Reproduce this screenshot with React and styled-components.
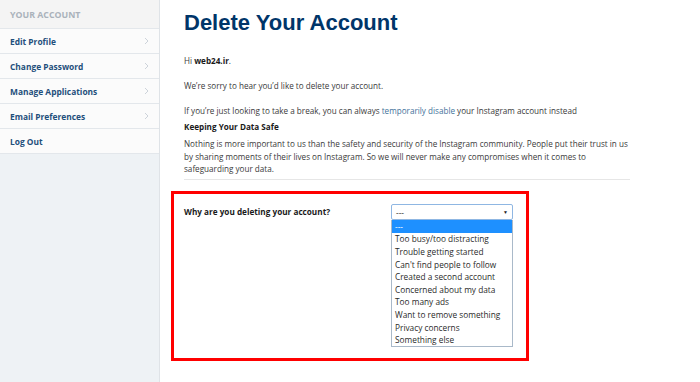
import React from 'react';
import styled, { createGlobalStyle } from 'styled-components';

const GlobalStyle = createGlobalStyle`
  html, body {
    margin: 0;
    padding: 0;
    background: #ffffff;
  }
  body {
    font-family: "Open Sans", "Liberation Sans", sans-serif;
    color: #262626;
  }
  * { box-sizing: border-box; }
`;

const navItems = ['Edit Profile', 'Change Password', 'Manage Applications', 'Email Preferences', 'Log Out'];

const reasons = [
    '---',
    'Too busy/too distracting',
    'Trouble getting started',
    "Can't find people to follow",
    'Created a second account',
    'Concerned about my data',
    'Too many ads',
    'Want to remove something',
    'Privacy concerns',
    'Something else',
];

function Chevron() {
    return (
        <svg width="5" height="8" viewBox="0 0 5 8">
            <path d="M1 1 L4 4 L1 7" fill="none" stroke="#c7ced6" strokeWidth="0.9" />
        </svg>
    );
}

function App() {
    return (
        <>
            <GlobalStyle />
            <Page>
                <Sidebar>
                    <SidebarHeader>Your Account</SidebarHeader>
                    {navItems.map((item) => (
                        <NavItem key={item}>
                            <span>{item}</span>
                            {item !== 'Log Out' && <Chevron />}
                        </NavItem>
                    ))}
                </Sidebar>

                <Main>
                    <Title>Delete Your Account</Title>
                    <Text $top={19}>Hi <b>web24.ir</b>.</Text>
                    <Text $top={12.5}>We&rsquo;re sorry to hear you&rsquo;d like to delete your account.</Text>
                    <Text $top={12.5}>
                        If you&rsquo;re just looking to take a break, you can always{' '}
                        <Link href="#">temporarily disable</Link> your Instagram account instead
                    </Text>
                    <SubTitle>Keeping Your Data Safe</SubTitle>
                    <Text $top={4.5}>
                        Nothing is more important to us than the safety and security of the Instagram community.
                        People put their trust in us by sharing moments of their lives on Instagram. So we will
                        never make any compromises when it comes to safeguarding your data.
                    </Text>
                    <Divider />

                    <FormSection>
                        <Label>Why are you deleting your account?</Label>
                        <SelectWrap>
                            <SelectBox>
                                <span>---</span>
                                <Arrow>&#9660;</Arrow>
                            </SelectBox>
                            <OptionList>
                                {reasons.map((r, i) => (
                                    <Option key={r} $active={i === 0}>{r}</Option>
                                ))}
                            </OptionList>
                        </SelectWrap>
                    </FormSection>
                </Main>
            </Page>
        </>
    );
}

const Page = styled.div`
  display: flex;
  height: 100vh;
  overflow: hidden;
`;

const Sidebar = styled.nav`
  width: 160px;
  flex-shrink: 0;
  background: #eef2f5;
  border-right: 1px solid #dfe3e7;
  display: flex;
  flex-direction: column;
`;

const SidebarHeader = styled.div`
  height: 29px;
  padding: 2px 0 0 10px;
  display: flex;
  align-items: center;
  background: #f4f4f4;
  border-bottom: 1px solid #e3e7eb;
  color: #aab2bb;
  font-size: 8.8px;
  font-weight: 700;
  text-transform: uppercase;
`;

const NavItem = styled.div`
  height: 25px;
  padding: 0 10px 0 10px;
  display: flex;
  align-items: center;
  justify-content: space-between;
  background: #fbfbfb;
  border-bottom: 1px solid #e3e7eb;
  color: #1f4f7b;
  font-size: 8.4px;
  font-weight: 700;
`;

const Main = styled.main`
  flex: 1;
  padding: 10px 0 0 24px;
`;

const Title = styled.h1`
  margin: 0;
  font-family: "Liberation Sans", Arial, sans-serif;
  font-size: 22px;
  line-height: 26px;
  font-weight: 700;
  color: #003569;
`;

const Text = styled.p`
  margin: ${(p) => p.$top}px 0 0;
  width: 446px;
  font-size: 8.15px;
  line-height: 12.5px;
  color: #3a3a3a;

  b {
    color: #1a1a1a;
    font-weight: 700;
  }
`;

const Link = styled.a`
  color: #3f729b;
  text-decoration: none;
`;

const SubTitle = styled.h3`
  margin: 3.5px 0 0;
  font-size: 8.15px;
  line-height: 12.5px;
  font-weight: 700;
  color: #1a1a1a;
`;

const Divider = styled.hr`
  margin: 3.5px 0 0;
  width: 446px;
  border: 0;
  border-top: 1px solid #e6e6e6;
`;

const FormSection = styled.section`
  margin: 11px 0 0 -13px;
  width: 358px;
  border: 3px solid #ff0000;
  padding: 10px 13px 11px 10px;
  display: flex;
  align-items: flex-start;
`;

const Label = styled.label`
  width: 207px;
  flex-shrink: 0;
  padding-top: 2px;
  font-size: 8.2px;
  line-height: 12px;
  font-weight: 700;
  color: #1a1a1a;
`;

const SelectWrap = styled.div`
  width: 122px;
  flex-shrink: 0;
  display: flex;
  flex-direction: column;
`;

const SelectBox = styled.div`
  height: 16px;
  padding: 0 4px;
  display: flex;
  align-items: center;
  justify-content: space-between;
  border: 1px solid #8fb7e3;
  border-radius: 2px;
  background: #ffffff;
  font-size: 8.3px;
  color: #333;
`;

const Arrow = styled.span`
  font-size: 5px;
  color: #222;
`;

const OptionList = styled.ul`
  margin: 0;
  padding: 0;
  list-style: none;
  border: 1px solid #a9b9c9;
  border-top: 0;
  background: #ffffff;
`;

const Option = styled.li`
  height: 12.6px;
  padding: 0 3px;
  display: flex;
  align-items: center;
  white-space: nowrap;
  font-size: 8.3px;
  color: ${(p) => (p.$active ? '#ffffff' : '#2a2a2a')};
  background: ${(p) => (p.$active ? '#1e90ff' : 'transparent')};
`;

export default App;
